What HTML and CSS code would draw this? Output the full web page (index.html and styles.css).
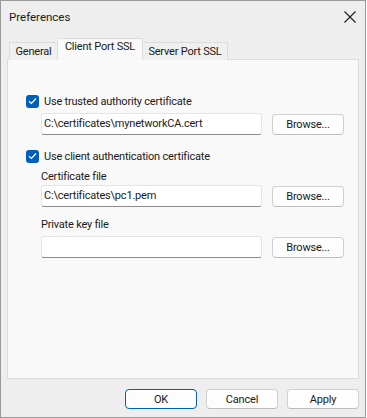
FILE: index.html
```html
<!DOCTYPE html>
<html lang="en">
<head>
    <meta charset="UTF-8">
    <title>Preferences</title>
    <link rel="stylesheet" href="styles.css">
</head>
<body>
    <div class="window">
        <div class="titlebar">
            <span class="title">Preferences</span>
            <svg class="close" width="12" height="12" viewBox="0 0 12 12">
                <path d="M0.5 0.5 L11.5 11.5 M11.5 0.5 L0.5 11.5" stroke="#1b1b1b" stroke-width="1.1" fill="none"/>
            </svg>
        </div>

        <div class="tabs">
            <div class="tab general">General</div>
            <div class="tab active">Client Port SSL</div>
            <div class="tab server">Server Port SSL</div>
        </div>

        <div class="panel">
            <label class="check-row first">
                <span class="checkbox">
                    <svg width="9" height="8" viewBox="0 0 9 8"><path d="M1 4.2 L3.4 6.5 L8 1.5" stroke="#fff" stroke-width="1.2" fill="none"/></svg>
                </span>
                Use trusted authority certificate
            </label>
            <div class="field-row gap-small">
                <div class="textbox">C:\certificates\mynetworkCA.cert</div>
                <button class="btn">Browse...</button>
            </div>

            <label class="check-row second">
                <span class="checkbox">
                    <svg width="9" height="8" viewBox="0 0 9 8"><path d="M1 4.2 L3.4 6.5 L8 1.5" stroke="#fff" stroke-width="1.2" fill="none"/></svg>
                </span>
                Use client authentication certificate
            </label>
            <div class="indent">
                <div class="field-label cert">Certificate file</div>
                <div class="field-row">
                    <div class="textbox">C:\certificates\pc1.pem</div>
                    <button class="btn">Browse...</button>
                </div>
                <div class="field-label key">Private key file</div>
                <div class="field-row gap-key">
                    <div class="textbox"></div>
                    <button class="btn">Browse...</button>
                </div>
            </div>
        </div>

        <div class="footer">
            <button class="btn default">OK</button>
            <button class="btn">Cancel</button>
            <button class="btn">Apply</button>
        </div>
    </div>
</body>
</html>
```

FILE: styles.css
```css
body {
    margin: 0;
    background-color: #ffffff;
    font-family: Roboto, "Liberation Sans", Arial, sans-serif;
    font-size: 11px;
    letter-spacing: -0.2px;
    color: #1a1a1a;
}
.window {
    width: 366px;
    height: 418px;
    box-sizing: border-box;
    border: 1px solid #9a9a9a;
    background-color: #eeeeee;
}
.titlebar {
    height: 29px;
    display: flex;
    align-items: center;
    justify-content: space-between;
    padding: 0 9px 0 8px;
    margin-top: 1px;
}
.title {
    font-size: 11.5px;
    letter-spacing: 0;
}
.close {
    display: block;
}
.tabs {
    display: flex;
    align-items: flex-end;
    height: 28px;
    margin-left: 8px;
    position: relative;
    z-index: 1;
}
.tab {
    height: 17px;
    line-height: 18px;
    text-align: center;
    border: 1px solid #dcdcdc;
    border-bottom: none;
    background-color: #f0f0f0;
    margin-bottom: -1px;
    white-space: nowrap;
}
.tab.general {
    width: 47px;
}
.tab.server {
    width: 84px;
    border-left: none;
}
.tab.active {
    width: 84px;
    height: 21px;
    line-height: 16px;
    background-color: #f9f9f9;
    border-left: none;
}
.panel {
    margin: 0 6px 0 6px;
    height: 320px;
    box-sizing: border-box;
    border: 1px solid #dcdcdc;
    background-color: #f9f9f9;
    padding-left: 18px;
}
.check-row {
    display: flex;
    align-items: center;
    height: 16px;
    gap: 5px;
}
.check-row.first {
    margin-top: 33px;
}
.check-row.second {
    margin-top: 13px;
}
.checkbox {
    width: 13px;
    height: 13px;
    border-radius: 3px;
    background-color: #005fb8;
    display: flex;
    align-items: center;
    justify-content: center;
}
.checkbox svg {
    display: block;
}
.indent {
    padding-left: 15px;
}
.field-row {
    display: flex;
    align-items: center;
    gap: 10px;
}
.check-row + .field-row {
    margin-top: 4px;
    padding-left: 15px;
}
.field-label {
    height: 16px;
    line-height: 16px;
}
.field-label.cert {
    margin-top: 5px;
}
.field-label.key {
    margin-top: 10px;
}
.gap-key {
    margin-top: 3px;
}
.textbox {
    width: 221px;
    height: 22px;
    box-sizing: border-box;
    background-color: #ffffff;
    border: 1px solid #e5e5e5;
    border-bottom: 1px solid #8a8a8a;
    border-radius: 3px;
    padding: 0 2px;
    line-height: 20px;
    white-space: nowrap;
}
.btn {
    width: 72px;
    height: 21px;
    box-sizing: border-box;
    font-family: inherit;
    font-size: 11px;
    letter-spacing: -0.2px;
    color: #1a1a1a;
    background-color: #fdfdfd;
    border: 1px solid #d0d0d0;
    border-bottom-color: #bcbcbc;
    border-radius: 4px;
    padding: 0;
}
.footer {
    display: flex;
    justify-content: flex-end;
    gap: 9px;
    margin-top: 10px;
    padding-right: 6px;
}
.footer .btn {
    height: 20px;
}
.btn.default {
    border: 1px solid #005fb8;
}
```
